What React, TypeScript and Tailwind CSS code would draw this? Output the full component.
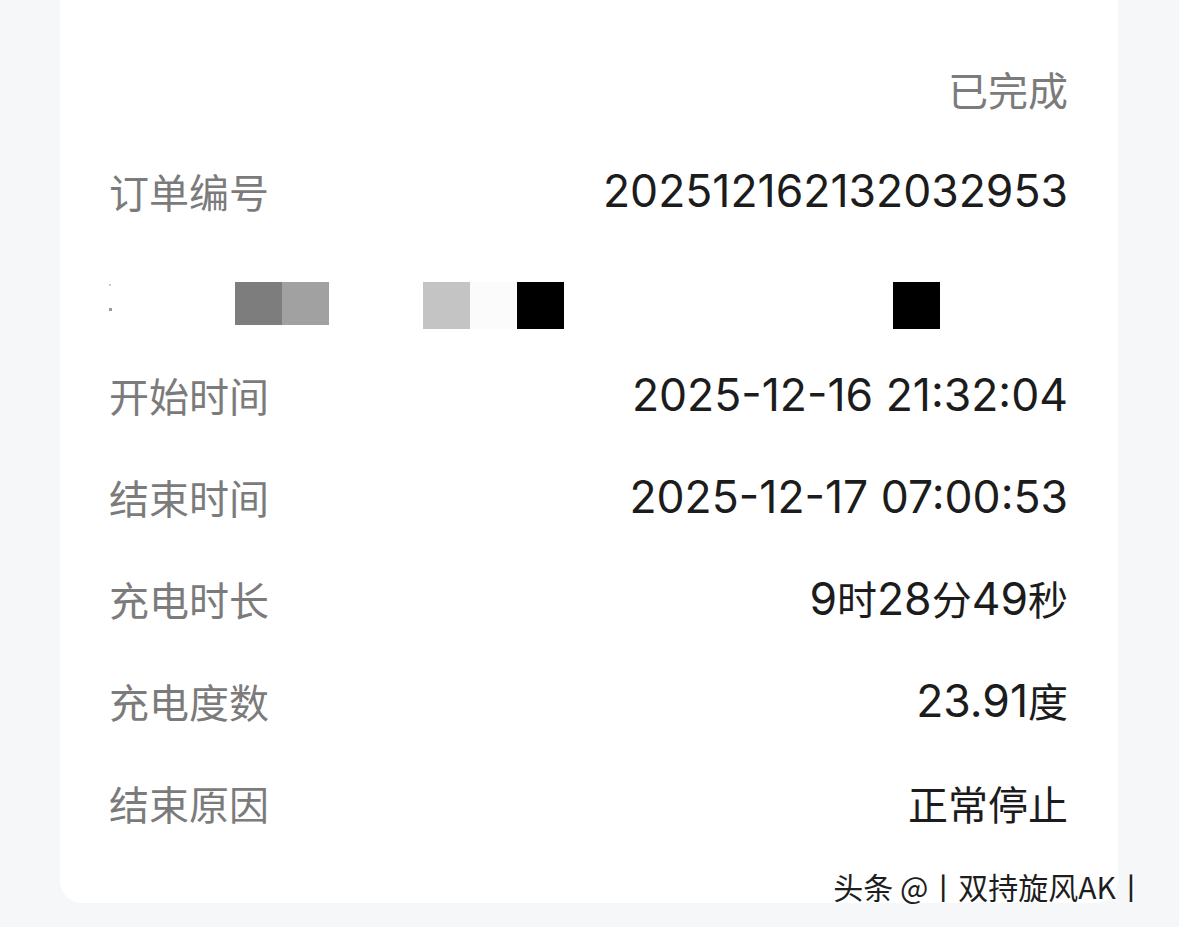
import React from 'react'

const rows = [
  { label: '订单编号', value: '202512162132032953' },
  { label: '开始时间', value: '2025-12-16 21:32:04' },
  { label: '结束时间', value: '2025-12-17 07:00:53' },
  { label: '充电时长', value: '9时28分49秒' },
  { label: '充电度数', value: '23.91度' },
  { label: '结束原因', value: '正常停止' },
]

// digits run wider than the CJK glyphs in the original, so split the runs
function Value({ text }: { text: string }) {
  const parts = text.match(/[\u4e00-\u9fff]+|[^\u4e00-\u9fff]+/g) ?? []
  return (
    <span className="text-[#1c1c1c]">
      {parts.map((p, i) =>
        /[\u4e00-\u9fff]/.test(p) ? (
          <span key={i} className="text-[40px]">{p}</span>
        ) : (
          <span key={i} className="text-[44.5px] font-['Inter',sans-serif]">{p}</span>
        )
      )}
    </span>
  )
}

function Row({ label, value }: { label: string; value: string }) {
  return (
    <div className="h-[102px] flex items-center justify-between">
      <span className="text-[40px] text-[#7b7b7b]">{label}</span>
      <Value text={value} />
    </div>
  )
}

export default function App() {
  return (
    <div className="relative w-[1179px] h-[927px] overflow-hidden bg-[#f6f7f9] font-['Noto_Sans_CJK_SC','Noto_Sans',sans-serif] leading-none">
      <div className="ml-[60px] w-[1058px] -mt-[24px] bg-white rounded-[22px] pt-[62px] pb-[49px] pl-[49px] pr-[50px]">
        <div className="h-[102px] flex items-center justify-end">
          <span className="text-[40px] text-[#7b7b7b]">已完成</span>
        </div>
        <Row {...rows[0]} />

        {/* masked row */}
        <div className="h-[102px] flex items-start pt-[40px]">
          <div className="w-[126px] h-[47px] flex flex-col justify-between py-[2px]">
            <span className="w-[2px] h-[2px] bg-[#c8c8c8]" />
            <span className="w-[3px] h-[3px] bg-[#9a9a9a] mb-[16px]" />
          </div>
          <div className="w-[47px] h-[43px] bg-[#7d7d7d]" />
          <div className="w-[47px] h-[43px] bg-[#a1a1a1]" />
          <div className="w-[94px]" />
          <div className="w-[47px] h-[47px] bg-[#c4c4c4]" />
          <div className="w-[47px] h-[47px] bg-[#fbfbfb]" />
          <div className="w-[47px] h-[47px] bg-black" />
          <div className="w-[329px]" />
          <div className="w-[47px] h-[47px] bg-black" />
        </div>

        {rows.slice(1).map(r => (
          <Row key={r.label} {...r} />
        ))}
      </div>

      <div className="absolute right-[33px] bottom-[26px] text-[30px] text-[#1e1e1e] [text-shadow:1.5px_0_0_#fff]">
        头条 @丨双持旋风AK丨
      </div>
    </div>
  )
}
